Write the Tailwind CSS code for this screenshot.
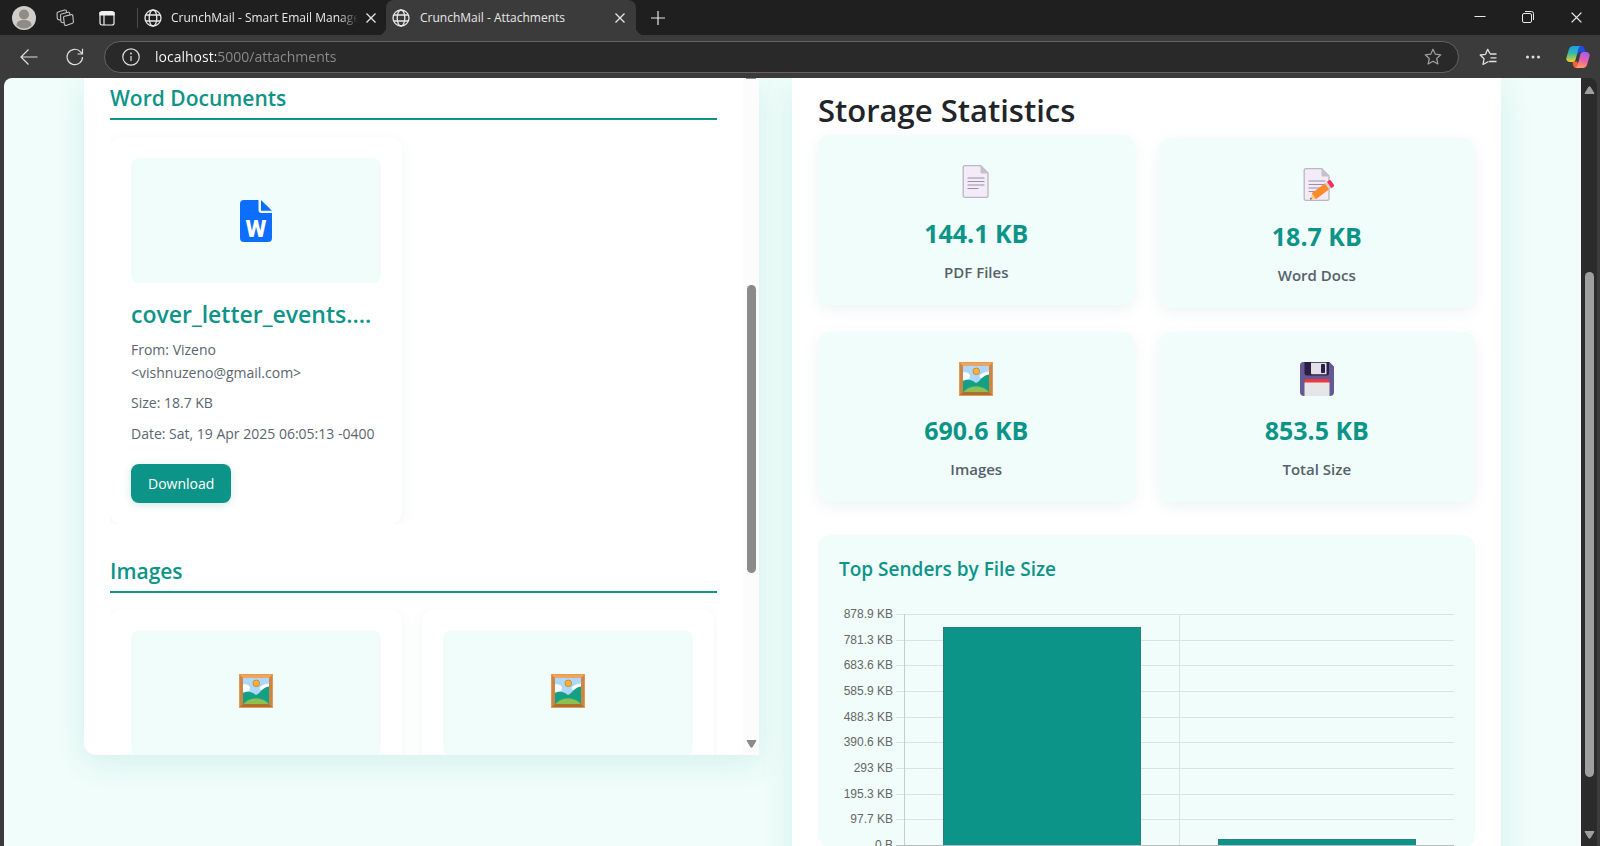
<!DOCTYPE html>
<html lang="en">
  <head>
    <meta charset="UTF-8" />
    <meta name="viewport" content="width=device-width, initial-scale=1.0" />
    <title>CrunchMail - Attachments</title>
    <script src="https://cdn.jsdelivr.net/npm/@tailwindcss/browser@4"></script>
    <style>
      body {
        font-family: "Open Sans", "Noto Sans", sans-serif;
      }
    </style>
  </head>
  <body class="h-screen flex flex-col overflow-hidden bg-[#3b3b3b] text-[#212529]">
    <!-- Shared icons -->
    <svg class="hidden" aria-hidden="true">
      <symbol id="globe" viewBox="0 0 18 18">
        <g fill="none" stroke="currentColor" stroke-width="1.3">
          <circle cx="9" cy="9" r="8" />
          <ellipse cx="9" cy="9" rx="3.8" ry="8" />
          <path d="M1.8 6h14.4M1.8 12h14.4" />
        </g>
      </symbol>
      <symbol id="close" viewBox="0 0 12 12">
        <path d="M1.5 1.5l9 9M10.5 1.5l-9 9" fill="none" stroke="currentColor" stroke-width="1.3" />
      </symbol>
      <symbol id="picture" viewBox="0 0 34 34">
        <rect width="34" height="34" fill="#eda55f" />
        <path d="M0 0l4 4v26l-4 4z" fill="#cd8540" />
        <path d="M34 0l-4 4v26l4 4z" fill="#cd8540" />
        <path d="M0 34l4-4h26l4 4z" fill="#ab7033" />
        <path d="M.5 .5h33v33H.5z" fill="none" stroke="#e59b55" />
        <rect x="4" y="4" width="26" height="26" fill="#aed8fb" />
        <path d="M4 10.500c4-.8 7 1.300 7 4 0 2.500-3 3.500-7 3.200zM30 9.500c-5 .5-9 2.500-9.500 5l3 3.500 6.500-3z" fill="#fff" />
        <circle cx="17.300" cy="9.300" r="3.300" fill="#f9b233" stroke="#c98a45" />
        <path d="M4 19c5-2 8-1.500 13 2 4-1.500 6-7.500 13-8.500V30H4z" fill="#14a085" />
        <path d="M4.500 30c3-3.800 8-5.500 12.500-5.500S27 26 29.500 30z" fill="#8cc152" />
      </symbol>
      <symbol id="page" viewBox="0 0 34 34">
        <path d="M5.700 .7h16L29 8v22.500a1.500 1.500 0 01-1.500 1.800H5.700a1.500 1.500 0 01-1.500-1.500V2.200A1.500 1.500 0 015.700 .7z" fill="#f3ecf8" stroke="#bcb6c3" stroke-width="1.300" />
        <path d="M21.500 1L29 8.500h-6a1.500 1.500 0 01-1.500-1.500z" fill="#c6c0cc" />
        <path d="M9 13h16M9 16.500h16M9 20h16M9 23.500h10" stroke="#998fa8" stroke-width="1.200" stroke-linecap="round" />
      </symbol>
    </svg>

    <!-- Tab strip -->
    <header class="h-[35px] shrink-0 flex items-center bg-[#1f1f1f] text-[#e8e8e8] text-[12px] pl-[3px]">
      <button class="w-[42px] flex justify-center" aria-label="Profile">
        <svg class="size-6" viewBox="0 0 24 24">
          <circle cx="12" cy="12" r="12" fill="#d0cecb" />
          <circle cx="12" cy="8.500" r="5" fill="#8f8b87" />
          <path d="M4.500 19.500c0-4 3-5.500 7.500-5.500s7.500 1.500 7.500 5.500a11 11 0 01-15 0z" fill="#8f8b87" />
        </svg>
      </button>
      <button class="w-10 flex justify-center" aria-label="Workspaces">
        <svg class="size-[18px]" viewBox="0 0 18 18" fill="none" stroke="#c4c4c4" stroke-width="1.100" stroke-linejoin="round">
          <path d="M8.600 7.200l6.600-1.600a1.300 1.300 0 011.600 1l.6 6.200a1.300 1.300 0 01-1 1.400L10 16.400a1.300 1.300 0 01-1.600-1L7.600 8.800a1.300 1.300 0 011-1.600z" />
          <path d="M8 13.800l-2-.3a1.300 1.300 0 01-1.100-1.300L4.500 6.400a1.300 1.300 0 011-1.400L12 3.200a1.300 1.300 0 011.700 1.100l.1 1.400" />
          <path d="M4.500 11.300L2.200 10.500a1.300 1.300 0 01-.9-1.300L1 4.400A1.300 1.300 0 012 3.100L8.700 1a1.300 1.300 0 011.700 1.100l.1 1.400" />
        </svg>
      </button>
      <button class="w-[44px] flex justify-center" aria-label="Tab actions">
        <svg class="size-4" viewBox="0 0 16 16" fill="none" stroke="#f0f0f0" stroke-width="1.200">
          <rect x="1" y="1.500" width="14" height="13.500" rx="2" />
          <path d="M1 2.500h14v2.500H1z" fill="#f0f0f0" />
          <path d="M5 5v10" />
        </svg>
      </button>
      <div class="ml-2 w-px h-5 bg-[#4a4a4a]"></div>
      <div class="w-[248px] flex items-center pl-1.5 pr-[9px]">
        <svg class="size-[18px] shrink-0"><use href="#globe" /></svg>
        <span class="ml-[9px] flex-1 overflow-hidden whitespace-nowrap mask-r-from-90%">CrunchMail - Smart Email Manager</span>
        <button class="ml-[7px]" aria-label="Close tab"><svg class="size-3"><use href="#close" /></svg></button>
      </div>
      <div
        class="relative self-stretch w-[250px] flex items-center pl-1.5 pr-2.5 rounded-t-lg bg-[#3b3b3b] before:absolute before:-left-2 before:bottom-0 before:size-2 before:rounded-br-lg before:shadow-[3px_3px_0_#3b3b3b] after:absolute after:-right-2 after:bottom-0 after:size-2 after:rounded-bl-lg after:shadow-[-3px_3px_0_#3b3b3b]"
      >
        <svg class="size-[18px] shrink-0"><use href="#globe" /></svg>
        <span class="ml-2.5 flex-1 whitespace-nowrap">CrunchMail - Attachments</span>
        <button aria-label="Close tab"><svg class="size-3"><use href="#close" /></svg></button>
      </div>
      <button class="ml-[14px]" aria-label="New tab">
        <svg class="size-4" viewBox="0 0 16 16" stroke="currentColor" stroke-width="1.200"><path d="M1 8h14M8 1v14" /></svg>
      </button>
      <div class="ml-auto flex">
        <button class="w-12 flex justify-center" aria-label="Minimize">
          <svg class="size-3" viewBox="0 0 12 12" stroke="currentColor"><path d="M.5 5.500h11" /></svg>
        </button>
        <button class="w-12 flex justify-center" aria-label="Restore">
          <svg class="size-3" viewBox="0 0 12 12" fill="none" stroke="currentColor">
            <rect x=".5" y="2.500" width="9" height="9" rx="1.500" />
            <path d="M3 .5h6.500a2 2 0 012 2V9" />
          </svg>
        </button>
        <button class="w-12 flex justify-center" aria-label="Close window"><svg class="size-[13px]"><use href="#close" /></svg></button>
      </div>
    </header>

    <!-- Toolbar -->
    <div class="relative h-[43px] shrink-0 flex items-center bg-[#3b3b3b] text-[#e0e0e0] pl-1.5">
      <button class="w-[46px] flex justify-center" aria-label="Back">
        <svg class="size-[18px]" viewBox="0 0 18 18" fill="none" stroke="currentColor" stroke-width="1.200"><path d="M17.500 9H1M8.500 1.500L1 9l7.500 7.500" /></svg>
      </button>
      <button class="w-[46px] flex justify-center" aria-label="Reload">
        <svg class="size-[18px]" viewBox="0 0 18 18" fill="none" stroke="currentColor" stroke-width="1.200"><path d="M16.500 9A7.700 7.700 0 1114.500 3.800L16.500 6M16.500 .8V6h-5" /></svg>
      </button>
      <div class="ml-1.5 mr-1.5 h-8 flex-1 flex items-center rounded-full border border-[#636363] bg-[#292929] pl-[17px] pr-4">
        <svg class="size-[18px]" viewBox="0 0 18 18" fill="none" stroke="currentColor" stroke-width="1.200">
          <circle cx="9" cy="9" r="8.200" />
          <path d="M9 8v5" />
          <circle cx="9" cy="5.500" r=".4" />
        </svg>
        <input
          type="text"
          aria-label="Address"
          value="localhost:5000/attachments"
          class="ml-[15px] flex-1 text-[14px] text-transparent bg-clip-text bg-[linear-gradient(90deg,#fff_61px,#8c8c8c_61px)] outline-none"
        />
        <svg class="size-[18px]" viewBox="0 0 18 18" fill="none" stroke="#a0a0a0" stroke-width="1.200" stroke-linejoin="round">
          <path d="M9 1.200l2.300 5 5.500 .6-4.100 3.700 1.200 5.500L9 13.200 4.100 16l1.200-5.500L1.200 6.800l5.500-.6z" />
        </svg>
      </div>
      <button class="w-[45px] flex justify-center" aria-label="Favorites">
        <svg class="size-[18px]" viewBox="0 0 18 18" fill="none" stroke="currentColor" stroke-width="1.300" stroke-linejoin="round">
          <path d="M9.500 13.500L4 16.500l1-5.700L1.200 7l5.300-.7L8.700 1.300l2.300 4.500M11 6h6.500M11.500 9.800h6M10 13.500h7.500" />
        </svg>
      </button>
      <button class="w-[45px] flex justify-center" aria-label="Settings and more">
        <svg class="w-4 h-1" viewBox="0 0 16 4" fill="currentColor"><circle cx="2.500" cy="2" r="1.500" /><circle cx="8" cy="2" r="1.500" /><circle cx="13.500" cy="2" r="1.500" /></svg>
      </button>
      <button class="w-[45px] flex justify-center" aria-label="Copilot">
        <svg class="size-6" viewBox="0 0 24 24">
          <defs>
            <linearGradient id="cpA" x1="0" y1="0" x2="0" y2="1">
              <stop offset="0" stop-color="#1b9cf0" />
              <stop offset=".45" stop-color="#35b8a8" />
              <stop offset="1" stop-color="#f5d321" />
            </linearGradient>
            <linearGradient id="cpB" x1="0.600" y1="0" x2="0.300" y2="1">
              <stop offset="0" stop-color="#a95cf0" />
              <stop offset=".5" stop-color="#e860a8" />
              <stop offset="1" stop-color="#ffa35c" />
            </linearGradient>
          </defs>
          <path d="M11 1h4.500a3 3 0 013 2.200L19.500 7H14l-3 3z" fill="#1c4fd8" />
          <path d="M6.500 16.500H11l3 6.500H10a3 3 0 01-2.800-2.200z" fill="#f2603c" />
          <path d="M6.500 1H15a3 3 0 00-2.500 2.200L9.500 15a3 3 0 01-2.800 2H3.500A3.300 3.300 0 01.5 12.500L3 4A4 4 0 016.500 1z" fill="url(#cpA)" />
          <path d="M17.500 23H9a3 3 0 002.500-2.200L14.500 9a3 3 0 012.800-2h3.200a3.300 3.300 0 013 4.500L21 20a4 4 0 01-3.500 3z" fill="url(#cpB)" />
        </svg>
      </button>
    </div>

    <!-- Page viewport -->
    <div class="flex-1 min-h-0 ml-1 mr-[3px] flex overflow-hidden rounded-tl-lg rounded-tr-lg bg-[#2b2b2b]">
      <main class="flex-1 min-w-0 bg-[#f0fdfa] px-20 grid grid-cols-[675fr_709fr] gap-[33px] items-start overflow-hidden">
        <!-- Attachments list -->
        <section class="h-[80vh] flex overflow-hidden rounded-bl-xl bg-white shadow-[0_8px_30px_rgba(13,148,136,0.12)]">
          <div class="flex-1 min-w-0 px-[26px] pt-[7px]">
            <h3 class="pb-[7px] border-b-2 border-[#0d9488] text-[21px] leading-[26px] font-semibold text-[#0d9488]">Word Documents</h3>
            <div class="grid grid-cols-2 gap-5 pr-[3px] pt-[17px] overflow-hidden">
              <article class="rounded-xl border border-white bg-white p-5 shadow-[0_4px_16px_rgba(15,80,100,0.06)]">
                <div class="h-[125px] flex items-center justify-center rounded-lg bg-[#f0fdfa]">
                  <svg class="w-8 h-[42px]" viewBox="0 0 32 42">
                    <path d="M4 0h14.500v10a3 3 0 003 3H32v25a4 4 0 01-4 4H4a4 4 0 01-4-4V4a4 4 0 014-4z" fill="#0d6efd" />
                    <path d="M21 0l11 10.800H21z" fill="#0d6efd" />
                    <text x="16" y="37" text-anchor="middle" font-family="Roboto" font-weight="800" font-size="24" fill="#fff">W</text>
                  </svg>
                </div>
                <h4 class="mt-4 text-[23px] leading-[30px] font-semibold text-[#0d9488] truncate">cover_letter_events.docx</h4>
                <p class="mt-[9px] text-[14px] leading-[23px] text-[#5b6570]">From: Vizeno<br />&lt;vishnuzeno@gmail.com&gt;</p>
                <p class="mt-[7px] text-[14px] leading-[23px] text-[#5b6570]">Size: 18.7 KB</p>
                <p class="mt-2 text-[14px] leading-[23px] text-[#5b6570] whitespace-nowrap">Date: Sat, 19 Apr 2025 06:05:13 -0400</p>
                <button class="mt-[19px] h-[39px] px-[17px] rounded-lg bg-[#0d9488] text-[14px] text-white shadow-[0_2px_8px_rgba(13,148,136,0.2)]">Download</button>
              </article>
            </div>

            <h3 class="mt-[34px] pb-[7px] border-b-2 border-[#0d9488] text-[21px] leading-[26px] font-semibold text-[#0d9488]">Images</h3>
            <div class="grid grid-cols-2 gap-5 pr-[3px] pt-[17px] overflow-hidden">
              <article class="rounded-xl border border-white bg-white p-5 shadow-[0_4px_16px_rgba(15,80,100,0.06)]">
                <div class="h-[125px] flex items-center justify-center pb-1.5 rounded-lg bg-[#f0fdfa]">
                  <svg class="size-[34px]"><use href="#picture" /></svg>
                </div>
              </article>
              <article class="rounded-xl border border-white bg-white p-5 shadow-[0_4px_16px_rgba(15,80,100,0.06)]">
                <div class="h-[125px] flex items-center justify-center pb-1.5 rounded-lg bg-[#f0fdfa]">
                  <svg class="size-[34px]"><use href="#picture" /></svg>
                </div>
              </article>
            </div>
          </div>
          <!-- list scrollbar -->
          <div class="w-4 flex flex-col items-center bg-[#fcfcfc] pb-[7px]">
            <div class="w-2.5 h-px bg-[#8b8b8b]"></div>
            <div class="mt-[206px] w-[9px] h-[288px] rounded-full bg-[#8b8b8b]"></div>
            <svg class="mt-auto w-[11px] h-2" viewBox="0 0 11 8"><path d="M1 .5h9L6.200 7a1 1 0 01-1.400 0z" fill="#8b8b8b" stroke="#8b8b8b" stroke-linejoin="round" /></svg>
          </div>
        </section>

        <!-- Storage statistics -->
        <section class="h-screen px-[26px] pt-[13px] bg-white shadow-[0_8px_30px_rgba(13,148,136,0.12)]">
          <h2 class="text-[31px] leading-[38px] font-semibold">Storage Statistics</h2>
          <div class="mt-[9px] grid grid-cols-2 gap-6 text-center">
            <div class="-translate-y-[3px] rounded-xl bg-[#f0fdfa] p-5 shadow-[0_4px_16px_rgba(15,80,100,0.07)]">
              <div class="h-[54px] flex items-center justify-center"><svg class="size-[34px]"><use href="#page" /></svg></div>
              <div class="mt-1.5 text-[25px] leading-9 font-bold text-[#0d9488]">144.1 KB</div>
              <div class="mt-2 text-[15px] leading-[26px] font-semibold text-[#56616b]">PDF Files</div>
            </div>
            <div class="rounded-xl bg-[#f0fdfa] p-5 shadow-[0_4px_16px_rgba(15,80,100,0.07)]">
              <div class="h-[54px] flex items-center justify-center">
                <svg class="size-[34px]" viewBox="0 0 34 34">
                  <use href="#page" width="34" height="34" />
                  <path d="M10 31.500l2.200-5.800 3.600 5z" fill="#ffce7c" />
                  <path d="M10 31.500l.8-2 1.200 1.600z" fill="#433b6b" />
                  <path d="M11.800 25.200L25 15.200l4.200 6-13.300 10z" fill="#ff8a2b" />
                  <path d="M25 15.200l2-1.500 4.200 6-2 1.500z" fill="#d3d3d3" />
                  <path d="M27 13.700l1.500-1.100a2 2 0 012.800 .4l2.300 3.300a2 2 0 01-.5 2.700l-1.900 1.300z" fill="#f8305c" />
                </svg>
              </div>
              <div class="mt-1.5 text-[25px] leading-9 font-bold text-[#0d9488]">18.7 KB</div>
              <div class="mt-2 text-[15px] leading-[26px] font-semibold text-[#56616b]">Word Docs</div>
            </div>
            <div class="rounded-xl bg-[#f0fdfa] p-5 shadow-[0_4px_16px_rgba(15,80,100,0.07)]">
              <div class="h-[54px] flex items-center justify-center"><svg class="size-[34px]"><use href="#picture" /></svg></div>
              <div class="mt-1.5 text-[25px] leading-9 font-bold text-[#0d9488]">690.6 KB</div>
              <div class="mt-2 text-[15px] leading-[26px] font-semibold text-[#56616b]">Images</div>
            </div>
            <div class="rounded-xl bg-[#f0fdfa] p-5 shadow-[0_4px_16px_rgba(15,80,100,0.07)]">
              <div class="h-[54px] flex items-center justify-center">
                <svg class="size-[34px]" viewBox="0 0 34 34">
                  <path d="M3.500 0h26L34 4.500V30a4 4 0 01-4 4H4a4 4 0 01-4-4V3.500A3.500 3.500 0 013.500 0z" fill="#635994" />
                  <path d="M4.500 0h24.500v11a2.500 2.500 0 01-2.500 2.500H7A2.500 2.500 0 014.500 11z" fill="#2c1f45" />
                  <path d="M11 .7h15.500v11.600H12a1 1 0 01-1-1z" fill="#e3e1e6" />
                  <rect x="21" y="2" width="4" height="9" rx=".8" fill="#2c1f45" />
                  <path d="M6.500 17h21a2 2 0 012 2v2H4.500v-2a2 2 0 012-2z" fill="#f0373f" />
                  <path d="M4.500 20.500h25V34h-25z" fill="#e6e6e6" />
                </svg>
              </div>
              <div class="mt-1.5 text-[25px] leading-9 font-bold text-[#0d9488]">853.5 KB</div>
              <div class="mt-2 text-[15px] leading-[26px] font-semibold text-[#56616b]">Total Size</div>
            </div>
          </div>

          <!-- Top senders chart -->
          <div class="mt-[33px] h-[312px] rounded-xl bg-[#f0fdfa] px-[21px] pt-[22px]">
            <h3 class="text-[19px] leading-6 font-semibold text-[#0d9488]">Top Senders by File Size</h3>
            <div class="mt-[25px] flex gap-[3px]">
              <div class="w-[54px] h-[247px] flex flex-col justify-between text-right text-[12px] leading-4 text-[#666] font-['Liberation_Sans',Arial,sans-serif]">
                <span>878.9 KB</span>
                <span>781.3 KB</span>
                <span>683.6 KB</span>
                <span>585.9 KB</span>
                <span>488.3 KB</span>
                <span>390.6 KB</span>
                <span>293 KB</span>
                <span>195.3 KB</span>
                <span>97.7 KB</span>
                <span>0 B</span>
              </div>
              <div class="mt-2 h-[232px] flex-1 grid grid-cols-1 grid-rows-1">
                <div class="col-start-1 row-start-1 flex flex-col border-b border-[#b4bfbd]">
                  <div class="flex-1 border-t border-[#d8e4e1]"></div>
                  <div class="flex-1 border-t border-[#d8e4e1]"></div>
                  <div class="flex-1 border-t border-[#d8e4e1]"></div>
                  <div class="flex-1 border-t border-[#d8e4e1]"></div>
                  <div class="flex-1 border-t border-[#d8e4e1]"></div>
                  <div class="flex-1 border-t border-[#d8e4e1]"></div>
                  <div class="flex-1 border-t border-[#d8e4e1]"></div>
                  <div class="flex-1 border-t border-[#d8e4e1]"></div>
                  <div class="flex-1 border-t border-[#d8e4e1]"></div>
                </div>
                <div class="col-start-1 row-start-1 ml-2 mb-px flex">
                  <div class="flex-1 flex items-end justify-center border-l border-[#c3cfcc]">
                    <div class="w-[72%] bg-[#0d9488] border border-b-0 border-[#2c7f78]" style="height: 94.4%"></div>
                  </div>
                  <div class="flex-1 flex items-end justify-center border-l border-[#d8e4e1]">
                    <div class="w-[72%] bg-[#0d9488] border border-b-0 border-[#2c7f78]" style="height: 2.6%"></div>
                  </div>
                </div>
              </div>
            </div>
          </div>
        </section>
      </main>

      <!-- page scrollbar -->
      <div class="w-4 flex flex-col items-center pt-2 pb-[7px]">
        <svg class="w-[11px] h-2" viewBox="0 0 11 8"><path d="M1 7.500h9L6.200 1a1 1 0 00-1.400 0z" fill="#9f9f9f" stroke="#9f9f9f" stroke-linejoin="round" /></svg>
        <div class="mt-[178px] w-[9px] h-[505px] rounded-full bg-[#9f9f9f]"></div>
        <svg class="mt-auto w-[11px] h-2" viewBox="0 0 11 8"><path d="M1 .5h9L6.200 7a1 1 0 01-1.400 0z" fill="#9f9f9f" stroke="#9f9f9f" stroke-linejoin="round" /></svg>
      </div>
    </div>
  </body>
</html>
